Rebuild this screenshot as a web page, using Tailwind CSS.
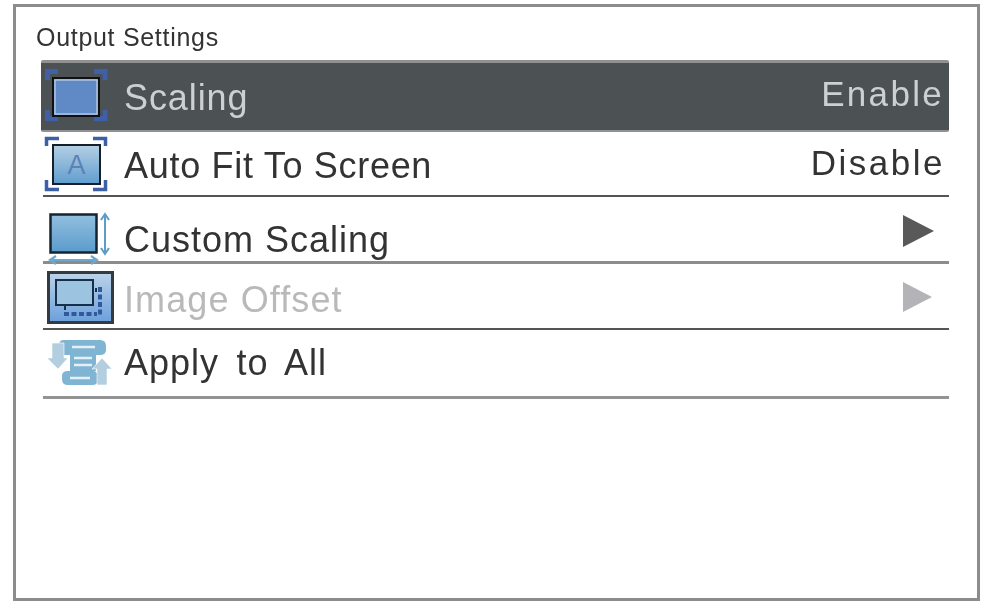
<!DOCTYPE html>
<html lang="en">
<head>
  <meta charset="UTF-8" />
  <title>Output Settings</title>
  <script src="https://cdn.jsdelivr.net/npm/@tailwindcss/browser@4"></script>
</head>
<body class="bg-white font-['Liberation_Sans',Arial,sans-serif] text-[#333] h-[606px] overflow-hidden">

  <!-- OSD frame -->
  <div class="ml-[13px] pt-[4px] w-[967px] blur-[0.5px]">
    <div class="h-[597px] border-[3px] border-[#8c8c8c]">

      <!-- Title -->
      <div class="h-[53px] pl-[20px] pt-[18px] text-[25px] leading-[25px] tracking-[0.7px]">Output Settings</div>

      <div class="ml-[25px] w-[908px] text-[36px] leading-[36px]">

        <!-- Scaling (selected) -->
        <div class="flex justify-between h-[72px] bg-[#4c5154] border-t-[3px] border-b-[2px] border-[#8f9193] rounded-[2px] text-[#cdd0d2]">
          <div class="flex">
            <svg class="w-[83px] h-[67px] shrink-0" viewBox="41 63 83 67">
              <path d="M47.500 80V71.500H58M94 71.500H105V80M47.500 110V118.500H58M94 118.500H105V110" fill="none" stroke="#3f5fa8" stroke-width="5"/>
              <rect x="53" y="78" width="46" height="38" fill="#5f8ac6" stroke="#111" stroke-width="2"/>
              <rect x="55" y="80" width="42" height="34" fill="none" stroke="#c4d2e4" stroke-width="1.2"/>
            </svg>
            <span class="mt-[17px] tracking-[0.9px]">Scaling</span>
          </div>
          <span class="mt-[13px] mr-[5px] text-[35px] leading-[35px] tracking-[2.300px]">Enable</span>
        </div>

        <!-- Auto Fit To Screen -->
        <div class="flex justify-between h-[65px] ml-[2px] border-b-[2px] border-[#555]">
          <div class="flex">
            <svg class="w-[81px] h-[63px] shrink-0" viewBox="43 132 81 63">
              <defs>
                <linearGradient id="autoFill" x1="0" y1="0" x2="0" y2="1">
                  <stop offset="0" stop-color="#b4d0e4" />
                  <stop offset="1" stop-color="#5f9dcf" />
                </linearGradient>
              </defs>
              <path d="M46.500 146V138.500H59M93 138.500H105.500V146M46.500 180V189.500H59M93 189.500H105.500V180" fill="none" stroke="#3d5fa6" stroke-width="3.500"/>
              <rect x="53" y="145" width="47" height="39" fill="url(#autoFill)" stroke="#16202b" stroke-width="2"/>
              <text x="76.500" y="174" text-anchor="middle" font-size="27" fill="#5d82b5" font-family="Liberation Sans">A</text>
            </svg>
            <span class="mt-[16px] tracking-[0.7px]">Auto Fit To Screen</span>
          </div>
          <span class="mt-[13px] mr-[4px] text-[35px] leading-[35px] tracking-[2.500px]">Disable</span>
        </div>

        <!-- Custom Scaling -->
        <div class="flex justify-between h-[67px] ml-[2px] border-b-[3px] border-[#8c8c8c]">
          <div class="flex">
            <svg class="w-[81px] h-[64px] shrink-0 overflow-visible relative" viewBox="43 197 81 64">
              <defs>
                <linearGradient id="customFill" x1="0" y1="0" x2="0" y2="1">
                  <stop offset="0" stop-color="#93c0e0" />
                  <stop offset="1" stop-color="#5a9bcb" />
                </linearGradient>
              </defs>
              <rect x="50.500" y="214.500" width="46" height="38" fill="url(#customFill)" stroke="#16242f" stroke-width="2.500"/>
              <path d="M105 216V252M101 220L105 214L109 220M101 248L105 254L109 248" fill="none" stroke="#5b9cc8" stroke-width="2"/>
              <path d="M52 260H95M56 256L50 260L56 264M91 256L97 260L91 264" fill="none" stroke="#6fa7cf" stroke-width="2.200"/>
            </svg>
            <span class="mt-[25px] tracking-[1px]">Custom Scaling</span>
          </div>
          <svg class="w-[31px] h-[32px] mt-[18px] mr-[15px] fill-[#595959]" viewBox="0 0 31 32"><path d="M0 0L31 16L0 32Z"/></svg>
        </div>

        <!-- Image Offset (disabled) -->
        <div class="flex justify-between h-[66px] ml-[2px] border-b-[2px] border-[#555] text-[#b9b9b9]">
          <div class="flex">
            <svg class="w-[81px] h-[64px] shrink-0" viewBox="43 264 81 64">
              <defs>
                <linearGradient id="offsetFill" x1="0" y1="0" x2="0" y2="1">
                  <stop offset="0" stop-color="#bcd3ea" />
                  <stop offset="1" stop-color="#6c9fdc" />
                </linearGradient>
              </defs>
              <rect x="48.500" y="272.500" width="64" height="50" fill="url(#offsetFill)" stroke="#333a40" stroke-width="3"/>
              <rect x="56" y="280" width="37" height="25" fill="#9cc4e0" stroke="#16304a" stroke-width="2"/>
              <path d="M100 287V317M64 314H97" fill="none" stroke="#2f5a9c" stroke-width="4" stroke-dasharray="5 2.500"/>
              <path d="M65 305V310" stroke="#16304a" stroke-width="2"/>
              <path d="M96 288V292" stroke="#16304a" stroke-width="2"/>
            </svg>
            <span class="mt-[18px] tracking-[1.100px]">Image Offset</span>
          </div>
          <svg class="w-[29px] h-[30px] mt-[18px] mr-[17px] fill-[#b3b3b8]" viewBox="0 0 29 30"><path d="M0 0L29 15L0 30Z"/></svg>
        </div>

        <!-- Apply to All -->
        <div class="flex h-[69px] ml-[2px] border-b-[3px] border-[#939393]">
          <svg class="w-[81px] h-[66px] shrink-0" viewBox="43 330 81 66">
            <path d="M64 340H100Q106 340 106 346V350Q106 355 100 355H96V371H94Q98 372 98 378V380Q98 385 92 385H68Q62 385 62 379V376Q62 371 68 371H70V355H64Q59 355 59 349V345Q59 340 64 340Z" fill="#7fb4d2"/>
            <path d="M72 347H95M74 358H92M74 365H92M70 378H90" stroke="#e4f0f6" stroke-width="2.500"/>
            <path d="M52 343H64V358H68L58 369L47 358H52Z" fill="#b3cfdf" stroke="#fff" stroke-width="0.600"/>
            <path d="M97 385V369H92L102 358L112 369H107V385Z" fill="#b3cfdf" stroke="#fff" stroke-width="0.600"/>
          </svg>
          <span class="mt-[15px] tracking-[1px] [word-spacing:6.500px]">Apply to All</span>
        </div>

      </div>
    </div>
  </div>
</body>
</html>
